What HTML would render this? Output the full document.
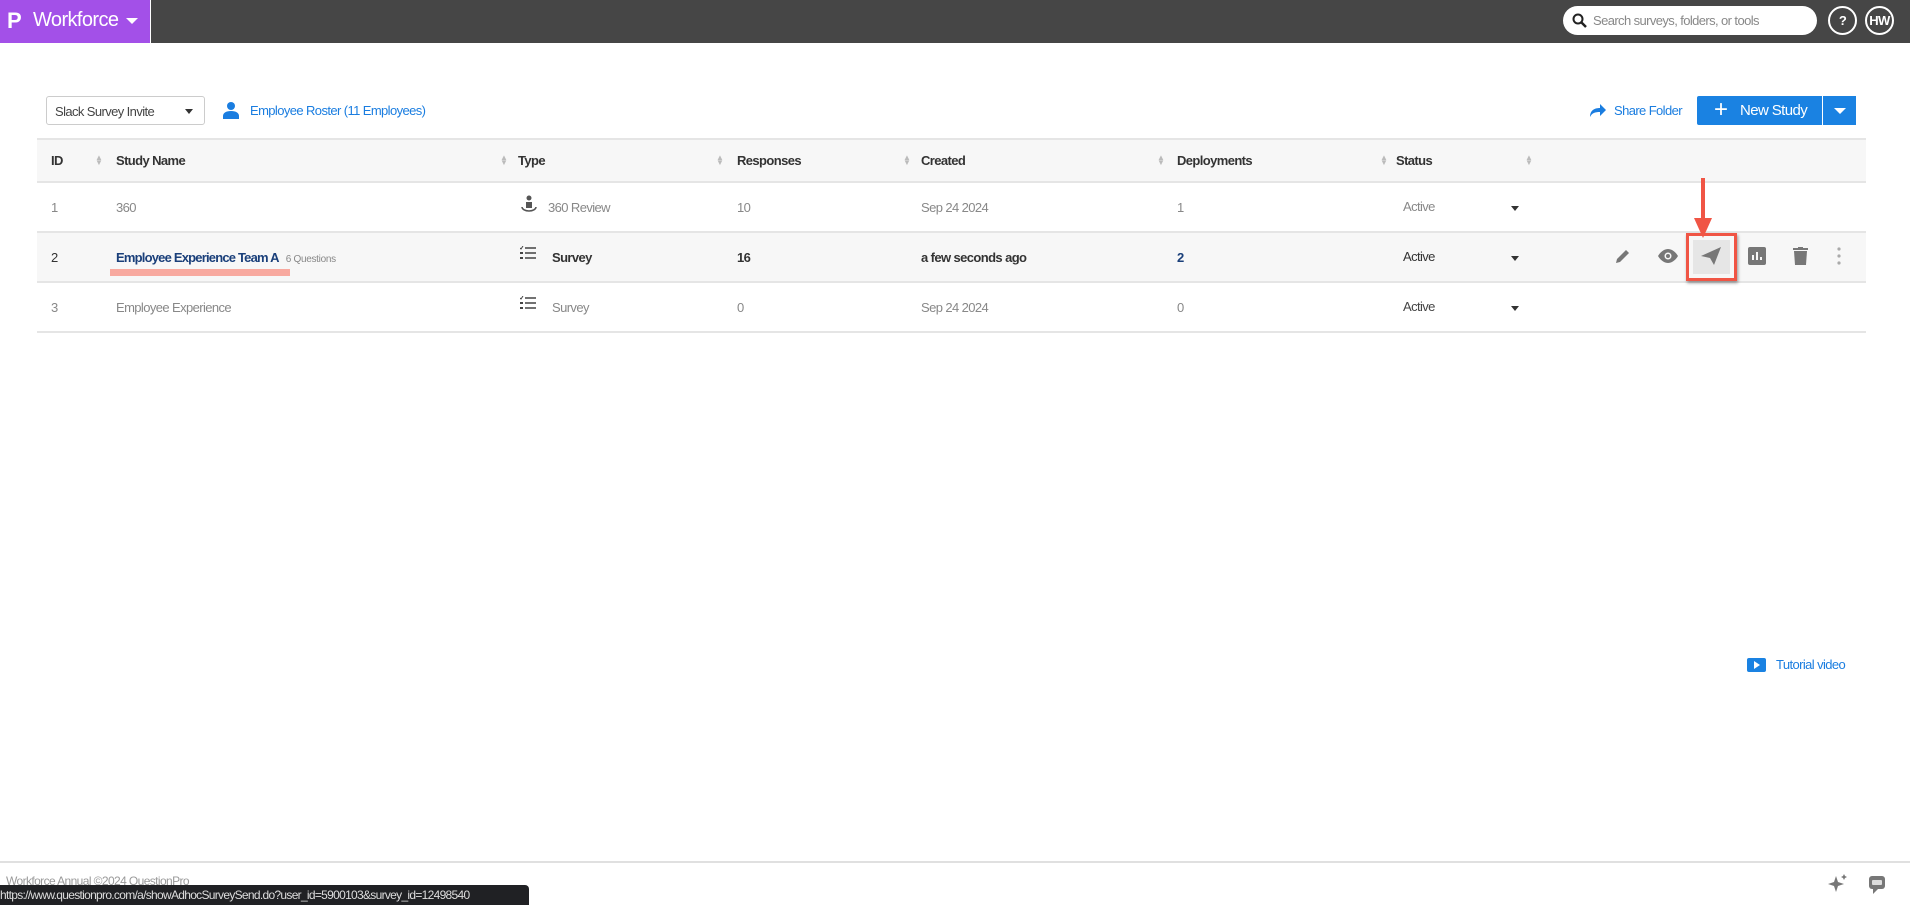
<!DOCTYPE html>
<html><head><meta charset="utf-8"><style>
*{box-sizing:border-box;margin:0;padding:0}
body{width:1910px;height:905px;overflow:hidden;background:#fff;font-family:"Liberation Sans",sans-serif;color:#555;position:relative;font-size:13px;letter-spacing:-0.6px}
.abs{position:absolute}
.hdr{left:0;top:0;width:1910px;height:43px;background:#464646}
.brand{left:0;top:0;width:151px;height:43px;background:#a350e8;color:#fff;font-size:20px;border-right:1px solid #fff}
.search{left:1563px;top:6px;width:254px;height:29px;background:#fff;border-radius:15px;color:#888;font-size:13px}
.circ{width:29px;height:29px;border:2px solid #fff;border-radius:50%;color:#fff;font-weight:bold;text-align:center;line-height:25px}
.sel{left:46px;top:96px;width:159px;height:29px;border:1px solid #ccc;border-radius:3px;color:#444;padding:7px 8px}
.blue{color:#1a7de0}
.th{left:37px;top:138px;width:1829px;height:45px;background:#f7f7f7;border-top:2px solid #e5e5e5;border-bottom:2px solid #e5e5e5}
.row{left:37px;width:1829px;height:50px;border-bottom:2px solid #e5e5e5}
.t{position:absolute;white-space:nowrap}
.hd{font-weight:bold;color:#333}
.sort{position:absolute;color:#bbb;font-size:8px;line-height:5px}
.caret{position:absolute;width:0;height:0;border-left:4px solid transparent;border-right:4px solid transparent;border-top:5px solid #333}
</style></head><body>
<div class="abs hdr"></div>
<div class="abs brand"><span class="t" style="left:7px;top:8px;font-weight:bold;font-size:22px">P</span><span class="t" style="left:33px;top:9px">Workforce</span><div class="caret" style="left:126px;top:18px;border-top-color:#fff;border-left-width:6px;border-right-width:6px;border-top-width:6px"></div></div>
<div class="abs search"><svg class="t" style="left:9px;top:7px" width="15" height="15" viewBox="0 0 15 15"><circle cx="6" cy="6" r="4.5" fill="none" stroke="#222" stroke-width="2"/><path d="M9.5 9.5L14 14" stroke="#222" stroke-width="2.5"/></svg><span class="t" style="left:30px;top:7px">Search surveys, folders, or tools</span></div>
<div class="abs circ" style="left:1828px;top:6px">?</div>
<div class="abs circ" style="left:1865px;top:6px;font-size:13px">HW</div>

<div class="abs sel">Slack Survey Invite<div class="caret" style="left:138px;top:12px"></div></div>
<svg class="abs" style="left:223px;top:101px" width="16" height="18" viewBox="0 0 16 18"><circle cx="8" cy="5" r="4" fill="#1a7de0"/><path d="M0 18v-3c0-3 3-5 8-5s8 2 8 5v3z" fill="#1a7de0"/></svg>
<span class="abs blue t" style="left:250px;top:103px">Employee Roster (11 Employees)</span>
<svg class="abs" style="left:1589px;top:103px" width="18" height="14" viewBox="0 0 18 14"><path d="M1 14C1 7 6 5 11 5V1l6 6-6 6V9C6 9 3 10 1 14z" fill="#1a7de0"/></svg>
<span class="abs blue t" style="left:1614px;top:103px">Share Folder</span>
<div class="abs" style="left:1697px;top:96px;width:125px;height:29px;background:#1a82e2;border-radius:2px 0 0 2px;color:#fff;font-size:15px"><span class="t" style="left:17px;top:0px;font-size:24px;line-height:28px">+</span><span class="t" style="left:43px;top:0;line-height:29px">New Study</span></div>
<div class="abs" style="left:1823px;top:96px;width:33px;height:29px;background:#1a82e2"><div class="caret" style="left:11px;top:12px;border-top-color:#fff;border-left-width:6px;border-right-width:6px;border-top-width:6px"></div></div>

<div class="abs th">
<span class="t hd" style="left:14px;top:13px">ID</span><span class="sort" style="left:58px;top:15px">▲<br>▼</span>
<span class="t hd" style="left:79px;top:13px">Study Name</span><span class="sort" style="left:463px;top:15px">▲<br>▼</span>
<span class="t hd" style="left:481px;top:13px">Type</span><span class="sort" style="left:679px;top:15px">▲<br>▼</span>
<span class="t hd" style="left:700px;top:13px">Responses</span><span class="sort" style="left:866px;top:15px">▲<br>▼</span>
<span class="t hd" style="left:884px;top:13px">Created</span><span class="sort" style="left:1120px;top:15px">▲<br>▼</span>
<span class="t hd" style="left:1140px;top:13px">Deployments</span><span class="sort" style="left:1343px;top:15px">▲<br>▼</span>
<span class="t hd" style="left:1359px;top:13px">Status</span><span class="sort" style="left:1488px;top:15px">▲<br>▼</span>
</div>

<div class="abs row" style="top:183px;color:#888">
<span class="t" style="left:14px;top:17px">1</span><span class="t" style="left:79px;top:17px">360</span>
<svg class="t" style="left:483px;top:12px" width="18" height="20" viewBox="0 0 18 20"><circle cx="9" cy="3" r="2.5" fill="#555"/><path d="M6 7h6v6H6z" fill="#555"/><path d="M2 12a7 4 0 1 0 14 0" fill="none" stroke="#555" stroke-width="1.5"/></svg>
<span class="t" style="left:511px;top:17px">360 Review</span>
<span class="t" style="left:700px;top:17px">10</span><span class="t" style="left:884px;top:17px">Sep 24 2024</span><span class="t" style="left:1140px;top:17px">1</span>
<span class="t" style="left:1366px;top:16px">Active</span><div class="caret" style="left:1474px;top:23px"></div>
</div>

<div class="abs row" style="top:233px;background:#f7f7f7;color:#333;font-weight:bold">
<span class="t" style="left:14px;top:17px;font-weight:normal">2</span>
<span class="t" style="left:79px;top:17px;color:#1a3f7a;letter-spacing:-0.8px">Employee Experience Team A<span style="font-size:10px;color:#888;font-weight:normal;margin-left:7px;letter-spacing:-0.3px">6 Questions</span></span>
<div class="t" style="left:73px;top:36px;width:180px;height:7px;background:#f8a99f"></div>
<svg class="t" style="left:483px;top:13px" width="16" height="14" viewBox="0 0 16 14"><path d="M5 2h11M5 7h11M5 12h11" stroke="#444" stroke-width="1.6"/><path d="M0 2l1 1 2-3" stroke="#444" fill="none"/><rect x="0" y="6" width="3" height="2" fill="#444"/><rect x="0" y="11" width="3" height="2" fill="#444"/></svg>
<span class="t" style="left:515px;top:17px">Survey</span>
<span class="t" style="left:700px;top:17px">16</span><span class="t" style="left:884px;top:17px">a few seconds ago</span><span class="t" style="left:1140px;top:17px;color:#1a3f7a">2</span>
<span class="t" style="left:1366px;top:16px;font-weight:normal">Active</span><div class="caret" style="left:1474px;top:23px"></div>
<svg class="t" style="left:1577px;top:14px" width="18" height="18" viewBox="0 0 18 18"><path d="M2 16l1-4 9-9 3 3-9 9z" fill="#777"/></svg>
<svg class="t" style="left:1621px;top:16px" width="20" height="14" viewBox="0 0 20 14"><path d="M0 7C3 2 7 0 10 0s7 2 10 7c-3 5-7 7-10 7S3 12 0 7z" fill="#777"/><circle cx="10" cy="7" r="3.5" fill="#f7f7f7"/><circle cx="10" cy="7" r="2" fill="#777"/></svg>
<div class="t" style="left:1649px;top:0px;width:51px;height:48px;border:3px solid #f05545;box-shadow:1px 2px 3px rgba(0,0,0,.4)"><div style="position:absolute;left:4px;top:4px;width:37px;height:34px;background:#e6e6e6"></div><svg style="position:absolute;left:12px;top:11px" width="20" height="18" viewBox="0 0 20 18"><path d="M0 9L20 0 13 18 9 11z" fill="#777"/></svg></div>
<svg class="t" style="left:1711px;top:14px" width="18" height="18" viewBox="0 0 18 18"><rect width="18" height="18" rx="2" fill="#777"/><path d="M5 13V8M9 13V5M13 13v-3" stroke="#f7f7f7" stroke-width="2"/></svg>
<svg class="t" style="left:1756px;top:14px" width="15" height="18" viewBox="0 0 15 18"><rect x="0" y="1" width="15" height="2" fill="#777"/><rect x="5" y="0" width="5" height="2" fill="#777"/><path d="M1 4h13l-1 14H2z" fill="#777"/></svg>
<svg class="t" style="left:1800px;top:14px" width="4" height="18" viewBox="0 0 4 18"><circle cx="2" cy="2" r="1.6" fill="#aaa"/><circle cx="2" cy="9" r="1.6" fill="#aaa"/><circle cx="2" cy="16" r="1.6" fill="#aaa"/></svg>
</div>
<svg class="abs" style="left:1694px;top:178px" width="18" height="60" viewBox="0 0 18 60"><path d="M7 0h4v40h7L9 60 0 40h7z" fill="#f05545"/></svg>

<div class="abs row" style="top:283px;color:#888">
<span class="t" style="left:14px;top:17px">3</span><span class="t" style="left:79px;top:17px">Employee Experience</span>
<svg class="t" style="left:483px;top:13px" width="16" height="14" viewBox="0 0 16 14"><path d="M5 2h11M5 7h11M5 12h11" stroke="#444" stroke-width="1.6"/><path d="M0 2l1 1 2-3" stroke="#444" fill="none"/><rect x="0" y="6" width="3" height="2" fill="#444"/><rect x="0" y="11" width="3" height="2" fill="#444"/></svg>
<span class="t" style="left:515px;top:17px">Survey</span>
<span class="t" style="left:700px;top:17px">0</span><span class="t" style="left:884px;top:17px">Sep 24 2024</span><span class="t" style="left:1140px;top:17px">0</span>
<span class="t" style="left:1366px;top:16px;color:#444">Active</span><div class="caret" style="left:1474px;top:23px"></div>
</div>

<div class="abs" style="left:1747px;top:658px;width:19px;height:14px;background:#1a82e2;border-radius:2px"><div class="caret" style="left:7px;top:3px;border-top:4px solid transparent;border-bottom:4px solid transparent;border-left:6px solid #fff;border-right:0"></div></div>
<span class="abs blue t" style="left:1776px;top:657px">Tutorial video</span>

<div class="abs" style="left:0;top:861px;width:1910px;height:2px;background:#e0e0e0"></div>
<span class="abs t" style="left:6px;top:874px;color:#999;font-size:12px">Workforce Annual ©2024 QuestionPro</span>
<div class="abs" style="left:0;top:885px;width:529px;height:20px;background:#202124;border-radius:0 4px 0 0;color:#ddd;font-size:12px;letter-spacing:-0.7px;padding:3px 0 0 0;white-space:nowrap;overflow:hidden">https://www.questionpro.com/a/showAdhocSurveySend.do?user_id=5900103&amp;survey_id=12498540</div>
<svg class="abs" style="left:1828px;top:874px" width="20" height="20" viewBox="0 0 20 20"><path d="M8 2l2 6 6 2-6 2-2 6-2-6-6-2 6-2z" fill="#777"/><path d="M16 0l1 2 2 1-2 1-1 2-1-2-2-1 2-1z" fill="#777"/></svg>
<svg class="abs" style="left:1866px;top:873px" width="22" height="22" viewBox="0 0 22 22"><rect x="3" y="3" width="16" height="13" rx="3" fill="#777"/><path d="M7 16v5l5-5z" fill="#777"/><rect x="6" y="7" width="10" height="5" rx="1" fill="#ddd"/></svg>
</body></html>
